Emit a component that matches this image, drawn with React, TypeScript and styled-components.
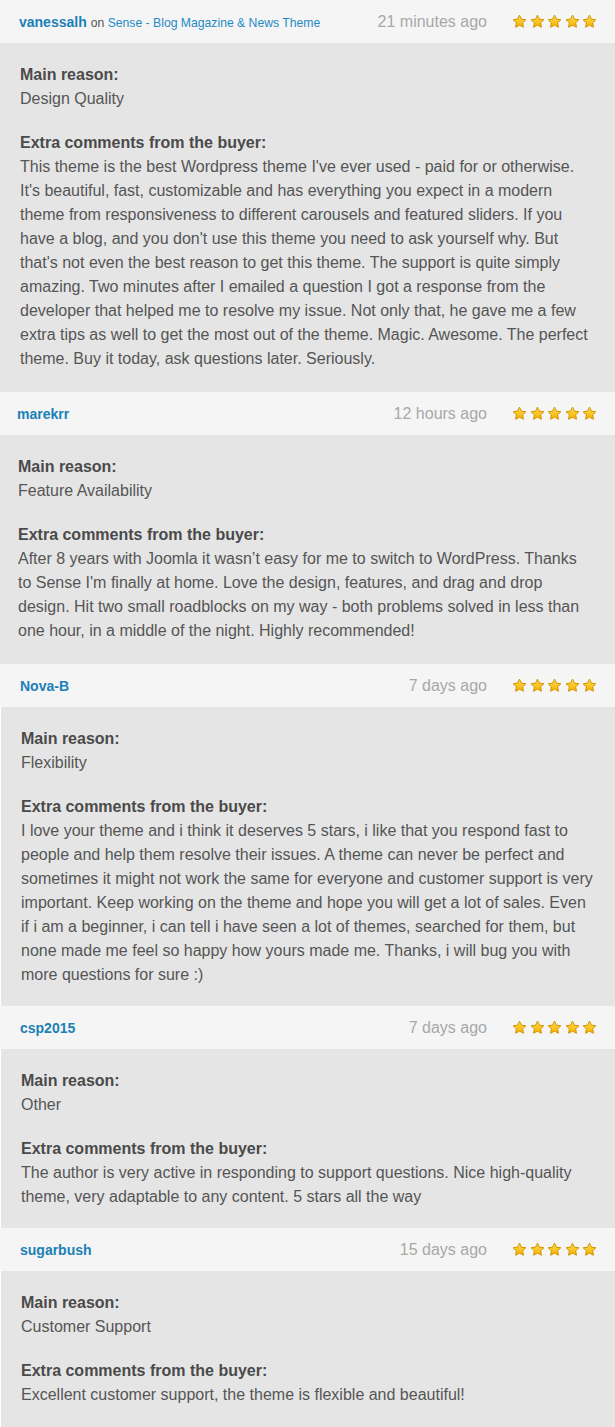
import React from "react";
import styled, { createGlobalStyle } from "styled-components";

type Review = {
  user: string;
  item?: string;
  time: string;
  reason: string;
  lines: string[];
  shift: number;
  tail: number;
  inset?: boolean;
};

const reviews: Review[] = [
  {
    user: "vanessalh",
    item: "Sense - Blog Magazine & News Theme",
    time: "21 minutes ago",
    reason: "Design Quality",
    shift: 19,
    tail: 21,
    lines: [
      "This theme is the best Wordpress theme I've ever used - paid for or otherwise.",
      "It's beautiful, fast, customizable and has everything you expect in a modern",
      "theme from responsiveness to different carousels and featured sliders. If you",
      "have a blog, and you don't use this theme you need to ask yourself why. But",
      "that's not even the best reason to get this theme. The support is quite simply",
      "amazing. Two minutes after I emailed a question I got a response from the",
      "developer that helped me to resolve my issue. Not only that, he gave me a few",
      "extra tips as well to get the most out of the theme. Magic. Awesome. The perfect",
      "theme. Buy it today, ask questions later. Seriously.",
    ],
  },
  {
    user: "marekrr",
    time: "12 hours ago",
    reason: "Feature Availability",
    shift: 17,
    tail: 21,
    lines: [
      "After 8 years with Joomla it wasn\u2019t easy for me to switch to WordPress. Thanks",
      "to Sense I'm finally at home. Love the design, features, and drag and drop",
      "design. Hit two small roadblocks on my way - both problems solved in less than",
      "one hour, in a middle of the night. Highly recommended!",
    ],
  },
  {
    user: "Nova-B",
    time: "7 days ago",
    reason: "Flexibility",
    shift: 20,
    tail: 19,
    inset: true,
    lines: [
      "I love your theme and i think it deserves 5 stars, i like that you respond fast to",
      "people and help them resolve their issues. A theme can never be perfect and",
      "sometimes it might not work the same for everyone and customer support is very",
      "important. Keep working on the theme and hope you will get a lot of sales. Even",
      "if i am a beginner, i can tell i have seen a lot of themes, searched for them, but",
      "none made me feel so happy how yours made me. Thanks, i will bug you with",
      "more questions for sure :)",
    ],
  },
  {
    user: "csp2015",
    time: "7 days ago",
    reason: "Other",
    shift: 20,
    tail: 19,
    inset: true,
    lines: [
      "The author is very active in responding to support questions. Nice high-quality",
      "theme, very adaptable to any content. 5 stars all the way",
    ],
  },
  {
    user: "sugarbush",
    time: "15 days ago",
    reason: "Customer Support",
    shift: 20,
    tail: 20,
    inset: true,
    lines: ["Excellent customer support, the theme is flexible and beautiful!"],
  },
];

const Star = (): JSX.Element => (
  <svg width="15" height="15" viewBox="0 0 24 24">
    <defs>
      <linearGradient id="starFill" x1="0" y1="0" x2="0" y2="1">
        <stop offset="0" stopColor="#ffe04a" />
        <stop offset="1" stopColor="#f6ae00" />
      </linearGradient>
    </defs>
    <path
      d="M12 1.8l3.1 6.5 7.1.9-5.2 4.9 1.3 7.1L12 17.8l-6.3 3.4 1.3-7.1-5.2-4.9 7.1-.9z"
      fill="url(#starFill)"
      stroke="#d29400"
      strokeWidth="1.6"
      strokeLinejoin="round"
    />
  </svg>
);

const App = (): JSX.Element => (
  <>
    <GlobalStyle />
    <List>
      {reviews.map((r) => (
        <Card key={r.user}>
          <Header $shift={r.shift}>
            <Who>
              <User>{r.user}</User>
              {r.item && (
                <Item>
                  on <a>{r.item}</a>
                </Item>
              )}
            </Who>
            <Time>{r.time}</Time>
            <Stars>
              {[0, 1, 2, 3, 4].map((i) => (
                <Star key={i} />
              ))}
            </Stars>
          </Header>
          <Body $shift={r.shift + 1} $tail={r.tail} $inset={!!r.inset}>
            <Section>
              <Label>Main reason:</Label>
              <Text>{r.reason}</Text>
            </Section>
            <Section>
              <Label>Extra comments from the buyer:</Label>
              {r.lines.map((l, i) => (
                <Text key={i}>{l}</Text>
              ))}
            </Section>
          </Body>
        </Card>
      ))}
    </List>
  </>
);

const GlobalStyle = createGlobalStyle`
  body {
    margin: 0;
    background: #ffffff;
    font-family: "Liberation Sans", Arial, sans-serif;
  }
`;

const List = styled.div`
  display: flex;
  flex-direction: column;
  width: 615px;
`;

const Card = styled.div`
  display: flex;
  flex-direction: column;
`;

const Header = styled.div<{ $shift: number }>`
  height: 43px;
  display: flex;
  align-items: center;
  background: #f5f5f5;
  padding: 0 18px 0 ${(p) => p.$shift}px;
  box-sizing: border-box;
`;

const Who = styled.div`
  flex: 1;
  display: flex;
  align-items: baseline;
  gap: 4px;
  white-space: nowrap;
`;

const User = styled.span`
  font-size: 14px;
  font-weight: 700;
  color: #1a80b6;
`;

const Item = styled.span`
  font-size: 12.2px;
  color: #555;
  a {
    color: #1f8ac4;
    text-decoration: none;
  }
`;

const Time = styled.span`
  font-size: 16px;
  color: #a8a8a8;
  margin-right: 25px;
`;

const Stars = styled.div`
  display: flex;
  gap: 2.5px;
`;

const Body = styled.div<{ $shift: number; $tail: number; $inset: boolean }>`
  background: #e5e5e5;
  padding: 20px 18px ${(p) => p.$tail}px
    ${(p) => p.$shift - (p.$inset ? 1 : 0)}px;
  margin-left: ${(p) => (p.$inset ? 1 : 0)}px;
  display: flex;
  flex-direction: column;
  gap: 20px;
`;

const Section = styled.div`
  display: flex;
  flex-direction: column;
`;

const Label = styled.div`
  font-size: 16px;
  line-height: 24px;
  font-weight: 700;
  color: #4a4a4a;
`;

const Text = styled.div`
  font-size: 16px;
  line-height: 24px;
  color: #555555;
  white-space: nowrap;
`;

export default App;
